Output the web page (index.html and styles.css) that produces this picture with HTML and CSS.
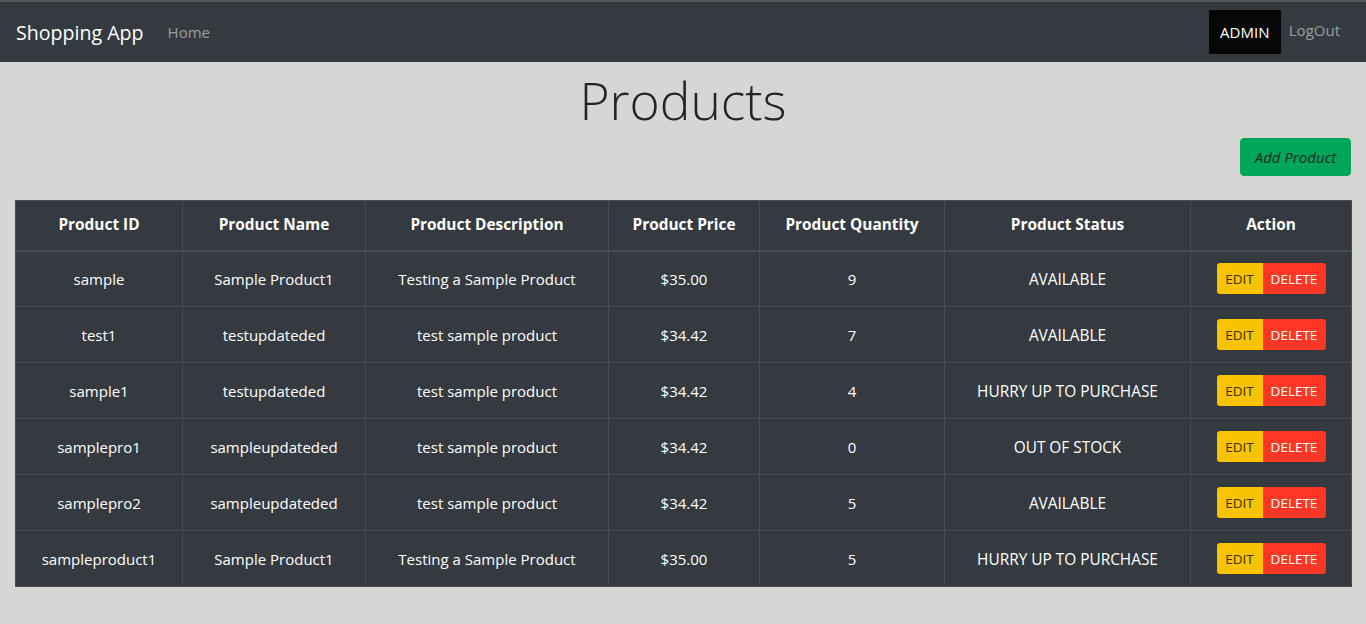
FILE: index.html
```html
<!DOCTYPE html>
<html>
<head>
<meta charset="utf-8">
<title>Shopping App</title>
<link rel="stylesheet" href="styles.css">
</head>
<body>
<nav class="navbar">
  <div class="nav-left">
    <span class="brand">Shopping App</span>
    <span class="nav-link">Home</span>
  </div>
  <div class="nav-right">
    <span class="admin">ADMIN</span>
    <span class="nav-link logout">LogOut</span>
  </div>
</nav>
<main class="page">
  <h1 class="title">Products</h1>
  <div class="toolbar">
    <button class="btn-add">Add Product</button>
  </div>
  <table class="products">
    <colgroup>
      <col class="c1"><col class="c2"><col class="c3"><col class="c4"><col class="c5"><col class="c6"><col class="c7">
    </colgroup>
    <thead>
      <tr>
        <th>Product ID</th><th>Product Name</th><th>Product Description</th><th>Product Price</th><th>Product Quantity</th><th>Product Status</th><th>Action</th>
      </tr>
    </thead>
    <tbody>
      <tr><td>sample</td><td>Sample Product1</td><td>Testing a Sample Product</td><td>$35.00</td><td>9</td><td class="status">AVAILABLE</td><td><div class="btn-group"><button class="btn-edit">EDIT</button><button class="btn-del">DELETE</button></div></td></tr>
      <tr><td>test1</td><td>testupdateded</td><td>test sample product</td><td>$34.42</td><td>7</td><td class="status">AVAILABLE</td><td><div class="btn-group"><button class="btn-edit">EDIT</button><button class="btn-del">DELETE</button></div></td></tr>
      <tr><td>sample1</td><td>testupdateded</td><td>test sample product</td><td>$34.42</td><td>4</td><td class="status">HURRY UP TO PURCHASE</td><td><div class="btn-group"><button class="btn-edit">EDIT</button><button class="btn-del">DELETE</button></div></td></tr>
      <tr><td>samplepro1</td><td>sampleupdateded</td><td>test sample product</td><td>$34.42</td><td>0</td><td class="status">OUT OF STOCK</td><td><div class="btn-group"><button class="btn-edit">EDIT</button><button class="btn-del">DELETE</button></div></td></tr>
      <tr><td>samplepro2</td><td>sampleupdateded</td><td>test sample product</td><td>$34.42</td><td>5</td><td class="status">AVAILABLE</td><td><div class="btn-group"><button class="btn-edit">EDIT</button><button class="btn-del">DELETE</button></div></td></tr>
      <tr><td>sampleproduct1</td><td>Sample Product1</td><td>Testing a Sample Product</td><td>$35.00</td><td>5</td><td class="status">HURRY UP TO PURCHASE</td><td><div class="btn-group"><button class="btn-edit">EDIT</button><button class="btn-del">DELETE</button></div></td></tr>
    </tbody>
  </table>
</main>
</body>
</html>
```
FILE: styles.css
```css
* { box-sizing: border-box; }
html, body { margin: 0; padding: 0; }
body {
  background: #d6d6d4;
  font-family: "Open Sans", "Noto Sans", sans-serif;
  font-size: 15px;
  color: #212529;
  border-top: 2px solid #555759;
}
.navbar {
  height: 60px;
  background: #343a40;
  display: flex;
  align-items: center;
  justify-content: space-between;
  padding: 0 16px;
}
.nav-left, .nav-right { display: flex; align-items: center; }
.brand {
  color: #fff;
  font-size: 19.6px;
  margin-right: 24px;
}
.nav-link {
  color: rgba(255,255,255,.5);
  font-size: 15px;
}
.nav-right { margin-right: 10px; }
.admin {
  background: #060808;
  color: #fff;
  height: 44px;
  width: 72px;
  display: flex;
  align-items: center;
  justify-content: center;
  font-size: 15px;
  margin-right: 8px;
}
.logout { position: relative; top: -2px; }
.page { padding: 0 15px; }
.title {
  margin: 2px 0 0;
  text-align: center;
  font-weight: 300;
  font-size: 51.5px;
  line-height: 72px;
  color: #212529;
}
.toolbar {
  display: flex;
  justify-content: flex-end;
  margin-top: 2px;
}
.btn-add {
  background: #00a65a;
  border: 1px solid #00a65a;
  border-radius: 4px;
  color: #1e2a22;
  font-family: inherit;
  font-style: italic;
  font-size: 15px;
  height: 38px;
  width: 111px;
  padding: 0;
}
.products {
  width: 100%;
  margin-top: 24px;
  border-collapse: collapse;
  table-layout: fixed;
  background: #343a40;
  color: #fff;
  border: 1px solid #454d55;
}
.c1 { width: 167px; }
.c2 { width: 183px; }
.c3 { width: 243px; }
.c4 { width: 151px; }
.c5 { width: 185px; }
.c6 { width: 246px; }
.c7 { width: 161px; }
.products th, .products td {
  border: 1px solid #454d55;
  text-align: center;
  vertical-align: middle;
  padding: 0 4px;
  line-height: 20px;
}
.products th {
  height: 50px;
  font-weight: 700;
  font-size: 15.4px;
  border-bottom-width: 2px;
}
.products td { height: 56px; }
.products td.status { font-size: 15.4px; padding-top: 3px; }
.btn-group { display: inline-flex; vertical-align: middle; }
.btn-group button {
  font-family: inherit;
  font-size: 13.5px;
  height: 31px;
  border: none;
  padding: 0;
}
.btn-edit {
  background: #f8c300;
  color: #3a3000;
  width: 46px;
  border-radius: 3px 0 0 3px;
}
.btn-del {
  background: #ff3525;
  color: #fff;
  width: 63px;
  border-radius: 0 3px 3px 0;
}
```
